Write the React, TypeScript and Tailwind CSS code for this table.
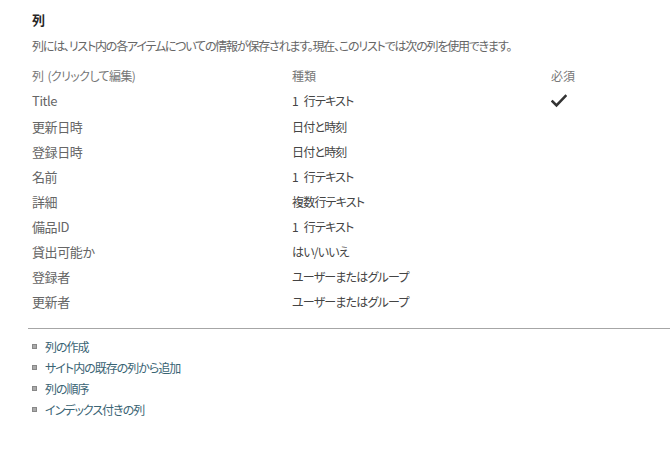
const font = "font-['Segoe_UI','Noto_Sans_CJK_JP',sans-serif] [font-feature-settings:'palt']";

const rows = [
  { name: "Title", type: "1 行テキスト", required: true },
  { name: "更新日時", type: "日付と時刻" },
  { name: "登録日時", type: "日付と時刻" },
  { name: "名前", type: "1 行テキスト" },
  { name: "詳細", type: "複数行テキスト" },
  { name: "備品ID", type: "1 行テキスト" },
  { name: "貸出可能か", type: "はい/いいえ" },
  { name: "登録者", type: "ユーザーまたはグループ" },
  { name: "更新者", type: "ユーザーまたはグループ" },
];

const links = ["列の作成", "サイト内の既存の列から追加", "列の順序", "インデックス付きの列"];

function CheckMark() {
  return (
    <svg width="16" height="14" viewBox="0 0 16 14">
      <path d="M1.5 7.5 L5.5 11.5 L14.5 2" fill="none" stroke="#333" strokeWidth="2.6" strokeLinecap="square" />
    </svg>
  );
}

export default function App() {
  return (
    <main className={`w-[670px] h-[450px] bg-white overflow-hidden ${font}`}>
      <section className="pl-[32px] pt-[12px]">
        <h2 className="text-[13px] leading-[16px] font-semibold text-[#262626] h-[18px]">列</h2>
        <p className="mt-[8px] text-[12px] leading-[16px] text-[#666] tracking-[-1.2px]">
          列には、リスト内の各アイテムについての情報が保存されます。現在、このリストでは次の列を使用できます。
        </p>

        <div className="mt-[9px]">
          <div className="flex h-[25px] items-center text-[12px] text-[#777]">
            <div className="w-[260px] tracking-[-0.6px] [word-spacing:2px]">列 (クリックして編集)</div>
            <div className="w-[259px]">種類</div>
            <div>必須</div>
          </div>
          {rows.map((r, i) => (
            <div key={r.name} className={`flex items-center ${i === 0 ? "h-[26px]" : "h-[25px]"}`}>
              <div className="w-[260px] text-[13px] text-[#666] tracking-[-0.4px]">{r.name}</div>
              <div className="w-[259px] text-[12px] text-[#444] tracking-[-0.8px] [word-spacing:4px]">{r.type}</div>
              <div>{r.required && <CheckMark />}</div>
            </div>
          ))}
        </div>
      </section>

      <div className="ml-[28px] mt-[14px] border-t border-[#a6a6a6]" />

      <ul className="pl-[32px] pt-[7px]">
        {links.map((l) => (
          <li key={l} className="flex items-center h-[21px]">
            <span className="w-[5px] h-[5px] bg-[#aaa] border border-[#888] mr-[8px]" />
            <span className="text-[12px] text-[#3a6474] tracking-[-1px]">{l}</span>
          </li>
        ))}
      </ul>
    </main>
  );
}
